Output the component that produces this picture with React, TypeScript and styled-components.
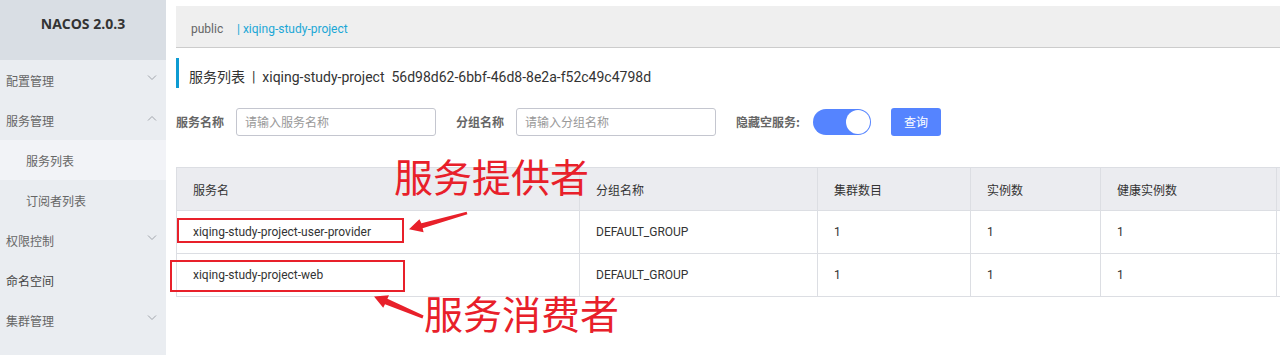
import React from 'react';
import styled, { createGlobalStyle } from 'styled-components';

const GlobalStyle = createGlobalStyle`
  html, body { margin: 0; padding: 0; background: #fff; }
  body { font-family: Roboto, "Noto Sans CJK SC", sans-serif; }
`;

const menu = [
  { label: '配置管理', arrow: 'down' },
  { label: '服务管理', arrow: 'up' },
  { label: '服务列表', sub: true, active: true },
  { label: '订阅者列表', sub: true },
  { label: '权限控制', arrow: 'down' },
  { label: '命名空间', dark: true },
  { label: '集群管理', arrow: 'down' },
];

const rows = [
  { name: 'xiqing-study-project-user-provider', group: 'DEFAULT_GROUP', cluster: 1, count: 1, healthy: 1 },
  { name: 'xiqing-study-project-web', group: 'DEFAULT_GROUP', cluster: 1, count: 1, healthy: 1 },
];

const Chevron = ({ dir }: { dir: string }) => (
  <ChevronIcon width="10" height="6" viewBox="0 0 10 6">
    <path d={dir === 'up' ? 'M1 5.5 L5 1.5 L9 5.5' : 'M1 0.5 L5 4.5 L9 0.5'} fill="none" stroke="#a0a4ab" strokeWidth="1" />
  </ChevronIcon>
);

const App = () => {
  return (
    <Page>
      <GlobalStyle />
      <Sidebar>
        <Brand>NACOS 2.0.3</Brand>
        {menu.map((m) => (
          <MenuItem key={m.label} $sub={m.sub} $active={m.active} $dark={m.dark}>
            {m.label}
            {m.arrow && <Chevron dir={m.arrow} />}
          </MenuItem>
        ))}
      </Sidebar>
      <Main>
        <Breadcrumb>
          <Crumb>public</Crumb>
          <CrumbActive>| xiqing-study-project</CrumbActive>
        </Breadcrumb>
        <Title>服务列表 &nbsp;|&nbsp; xiqing-study-project &nbsp;56d98d62-6bbf-46d8-8e2a-f52c49c4798d</Title>
        <Filters>
          <Label>服务名称</Label>
          <Input placeholder="请输入服务名称" />
          <Label>分组名称</Label>
          <Input placeholder="请输入分组名称" />
          <Label>隐藏空服务:</Label>
          <Switch>
            <Knob />
          </Switch>
          <Button>查询</Button>
        </Filters>
        <Table>
          <colgroup>
            <col style={{ width: 403 }} />
            <col style={{ width: 238 }} />
            <col style={{ width: 153 }} />
            <col style={{ width: 130 }} />
            <col style={{ width: 176 }} />
            <col style={{ width: 120 }} />
          </colgroup>
          <thead>
            <tr>
              <Th>服务名</Th>
              <Th>分组名称</Th>
              <Th>集群数目</Th>
              <Th>实例数</Th>
              <Th>健康实例数</Th>
              <Th />
            </tr>
          </thead>
          <tbody>
            {rows.map((r) => (
              <tr key={r.name}>
                <Td>{r.name}</Td>
                <Td>{r.group}</Td>
                <Td>{r.cluster}</Td>
                <Td>{r.count}</Td>
                <Td>{r.healthy}</Td>
                <Td />
              </tr>
            ))}
          </tbody>
        </Table>

        {/* screenshot annotations */}
        <Note style={{ left: 228, top: 150 }}>服务提供者</Note>
        <Note style={{ left: 258, top: 287 }}>服务消费者</Note>
        <RedBox style={{ left: 11, top: 218, width: 227, height: 25 }} />
        <RedBox style={{ left: 4, top: 260, width: 235, height: 32 }} />
        <Arrows width="320" height="190" viewBox="0 0 320 190">
          <polygon points="300.6,61.8 255.4,73.3 253.4,69.2 243,79.3 257.6,82.2 256.6,78.2 301.4,64.2" fill="#e8202a" />
          <polygon points="257.6,165.5 221.4,148.8 223,145.2 208,146.5 217.2,157.8 219,154.2 256.4,168.5" fill="#e8202a" />
        </Arrows>
      </Main>
    </Page>
  );
};

export default App;

const Page = styled.div`
  display: flex;
  width: 1280px;
  height: 355px;
  overflow: hidden;
`;

const Sidebar = styled.div`
  width: 166px;
  flex-shrink: 0;
  background: #eaedf1;
  font-family: "Noto Sans CJK SC", sans-serif;
`;

const Brand = styled.div`
  height: 60px;
  line-height: 48px;
  background: #d9dee4;
  text-align: center;
  font-family: "Open Sans", "Liberation Sans", sans-serif;
  font-weight: bold;
  font-size: 14px;
  color: #333;
`;

const MenuItem = styled.div<{ $sub?: boolean; $active?: boolean; $dark?: boolean }>`
  height: 40px;
  display: flex;
  align-items: center;
  justify-content: space-between;
  padding: 0 9px 0 ${({ $sub }) => ($sub ? 26 : 6)}px;
  font-size: 12px;
  color: ${({ $dark }) => ($dark ? '#444' : '#666')};
  background: ${({ $active }) => ($active ? '#f2f3f7' : 'transparent')};
`;

const ChevronIcon = styled.svg`
  margin-top: -4px;
`;

const Main = styled.div`
  position: relative;
  flex: 1;
  min-width: 0;
  padding: 6px 0 0 10px;
  overflow: hidden;
`;

const Breadcrumb = styled.div`
  box-sizing: border-box;
  height: 42px;
  display: flex;
  align-items: center;
  padding: 4px 0 0 15px;
  background: #efefef;
  border-bottom: 1px solid #cccccc;
  font-size: 12px;
`;

const Crumb = styled.span`
  color: #666;
  width: 46px;
`;

const CrumbActive = styled.span`
  color: #1ba7d6;
`;

const Title = styled.div`
  margin-top: 10px;
  height: 26px;
  padding-top: 4px;
  line-height: 30px;
  border-left: 3px solid #0d9bd2;
  padding-left: 10px;
  font-size: 14px;
  color: #333;
  white-space: nowrap;
`;

const Filters = styled.div`
  display: flex;
  align-items: center;
  margin-top: 20px;
  height: 27px;
`;

const Label = styled.span`
  font-family: "Noto Sans CJK SC", sans-serif;
  font-size: 12px;
  font-weight: bold;
  color: #666;
  margin-right: 12px;
`;

const Input = styled.input`
  box-sizing: border-box;
  width: 200px;
  height: 28px;
  margin-right: 20px;
  padding: 0 8px;
  border: 1px solid #c4c6cf;
  border-radius: 3px;
  font-family: "Noto Sans CJK SC", sans-serif;
  font-size: 12px;
  outline: none;
  &::placeholder { color: #999; }
`;

const Switch = styled.div`
  box-sizing: border-box;
  width: 58px;
  height: 26px;
  border-radius: 13px;
  background: #5584ff;
  display: flex;
  align-items: center;
  justify-content: flex-end;
  padding-right: 1px;
  margin-left: 1px;
  margin-right: 20px;
`;

const Knob = styled.div`
  width: 24px;
  height: 24px;
  border-radius: 50%;
  background: #fff;
`;

const Button = styled.button`
  width: 50px;
  height: 28px;
  border: none;
  border-radius: 3px;
  background: #5584ff;
  color: #fff;
  font-family: "Noto Sans CJK SC", sans-serif;
  font-size: 12px;
  padding: 0;
`;

const Table = styled.table`
  margin-top: 32px;
  width: 1220px;
  table-layout: fixed;
  border-collapse: collapse;
  font-size: 12px;
  color: #333;
`;

const Th = styled.th`
  height: 42px;
  padding: 0 16px;
  text-align: left;
  font-weight: normal;
  font-family: "Noto Sans CJK SC", sans-serif;
  background: #ebecf0;
  border: 1px solid #dcdee3;
  white-space: nowrap;
`;

const Td = styled.td`
  height: 42px;
  padding: 0 16px;
  border: 1px solid #dcdee3;
  white-space: nowrap;
`;

const Note = styled.div`
  position: absolute;
  font-family: "Noto Sans CJK SC", sans-serif;
  font-size: 39px;
  line-height: 1.3;
  color: #e8202a;
  white-space: nowrap;
  pointer-events: none;
`;

const RedBox = styled.div`
  position: absolute;
  box-sizing: border-box;
  border: 2px solid #e8202a;
`;

const Arrows = styled.svg`
  position: absolute;
  left: 0;
  top: 150px;
  pointer-events: none;
`;
